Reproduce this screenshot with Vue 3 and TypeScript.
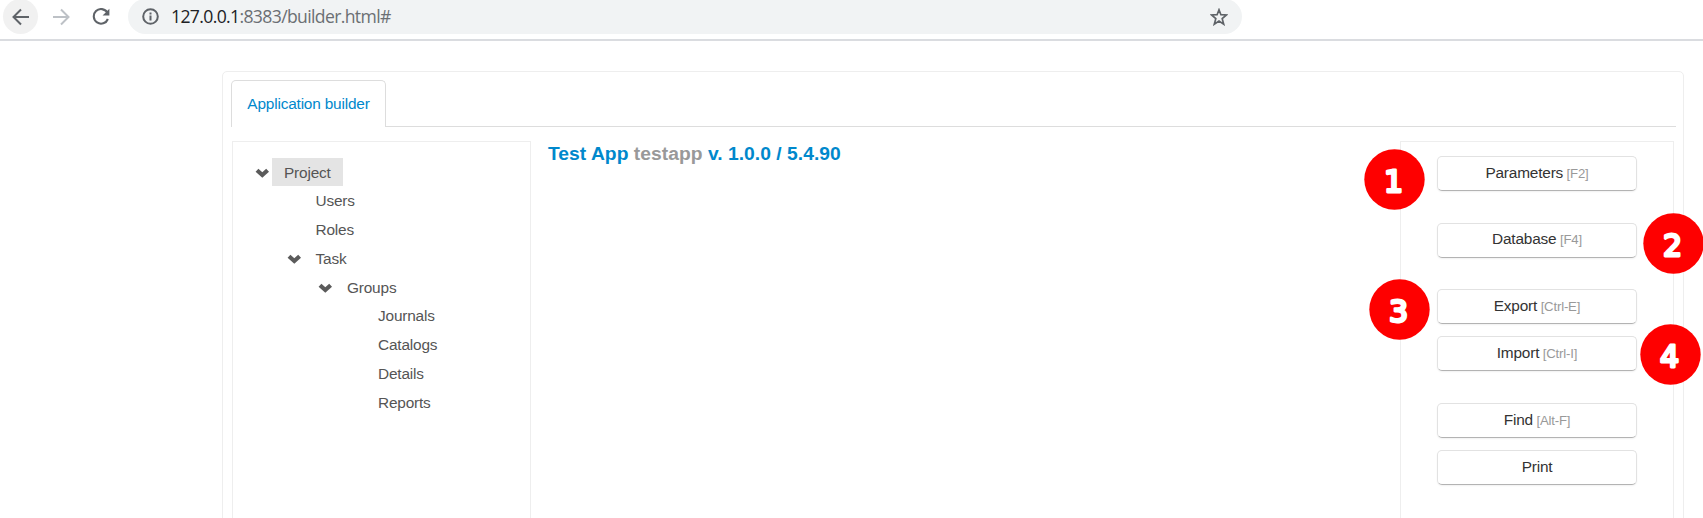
<script setup lang="ts">
interface TreeNode {
  label: string
  level: number
  open?: boolean
  selected?: boolean
}

interface Action {
  label: string
  key?: string
}

const tree: TreeNode[] = [
  { label: 'Project', level: 0, open: true, selected: true },
  { label: 'Users', level: 1 },
  { label: 'Roles', level: 1 },
  { label: 'Task', level: 1, open: true },
  { label: 'Groups', level: 2, open: true },
  { label: 'Journals', level: 3 },
  { label: 'Catalogs', level: 3 },
  { label: 'Details', level: 3 },
  { label: 'Reports', level: 3 },
]

const actionGroups: Action[][] = [
  [{ label: 'Parameters', key: '[F2]' }],
  [{ label: 'Database', key: '[F4]' }],
  [
    { label: 'Export', key: '[Ctrl-E]' },
    { label: 'Import', key: '[Ctrl-I]' },
  ],
  [{ label: 'Find', key: '[Alt-F]' }, { label: 'Print' }],
]

const markers = [1, 2, 3, 4]
</script>

<template>
  <div class="window">
    <header class="toolbar">
      <span class="nav-btn active">
        <svg width="18" height="18" viewBox="0 0 18 18"><path d="M17 9H2M9 1.500L1.500 9L9 16.500" fill="none" stroke="#5f6368" stroke-width="2" /></svg>
      </span>
      <span class="nav-btn">
        <svg width="18" height="18" viewBox="0 0 18 18"><path d="M1 9H16M9 1.500L16.500 9L9 16.500" fill="none" stroke="#bdc1c6" stroke-width="2" /></svg>
      </span>
      <span class="nav-btn">
        <svg width="18" height="18" viewBox="0 0 18 18">
          <path d="M15.300 4.500A7.300 7.300 0 1 0 15.900 11" fill="none" stroke="#5f6368" stroke-width="2.100" />
          <path d="M17.400 0.700V7.500H10.600Z" fill="#5f6368" />
        </svg>
      </span>
      <div class="omnibox">
        <svg class="info" width="17" height="17" viewBox="0 0 17 17">
          <circle cx="8.500" cy="8.500" r="7.300" fill="none" stroke="#5f6368" stroke-width="2" />
          <path d="M7.500 7.500h2v5h-2zM7.500 4.500h2v2h-2z" fill="#5f6368" />
        </svg>
        <span class="url"><b>127.0.0.1</b>:8383/builder.html#</span>
        <svg class="star" width="18" height="18" viewBox="0 0 18 18">
          <path d="M9 1.800L10.900 6.700L16.500 7L12.200 10.600L13.700 16.200L9 13.100L4.300 16.200L5.800 10.600L1.500 7L7.100 6.700Z" fill="none" stroke="#5f6368" stroke-width="1.700" />
        </svg>
      </div>
    </header>

    <main class="panel">
      <nav class="tabs"><a class="tab">Application builder</a></nav>
      <div class="columns">
        <aside class="tree">
          <div v-for="node in tree" :key="node.label" class="row" :class="'level-' + node.level">
            <svg v-if="node.open" class="chevron" width="15" height="11" viewBox="0 0 15 11">
              <path d="M2 3.200L7.300 8L12.600 3.200" fill="none" stroke="#5b5b5b" stroke-width="4.200" />
            </svg>
            <span class="label" :class="{ selected: node.selected }">{{ node.label }}</span>
          </div>
        </aside>
        <section class="content">
          <h4>Test App <span>testapp</span> v. 1.0.0 / 5.4.90</h4>
        </section>
        <aside class="actions">
          <div v-for="(group, i) in actionGroups" :key="i" class="group">
            <button v-for="action in group" :key="action.label" type="button">
              {{ action.label }}<small v-if="action.key">&nbsp;{{ action.key }}</small>
            </button>
          </div>
        </aside>
      </div>
    </main>

    <svg v-for="n in markers" :key="n" class="marker" :class="'marker-' + n" width="61" height="61" viewBox="0 0 61 61">
      <circle cx="30.500" cy="30.500" r="30.200" fill="#fe0000" />
      <text x="29.500" y="42.800" text-anchor="middle">{{ n }}</text>
    </svg>
  </div>
</template>

<style>
body {
  overflow: hidden;
}
</style>

<style scoped>
.window {
  position: relative;
  box-sizing: border-box;
  width: 1703px;
  height: 518px;
  overflow: hidden;
  background: #fff;
  font: 15.4px/22px "Liberation Sans", Arial, sans-serif;
  letter-spacing: -0.18px;
  color: #333;
}
.toolbar {
  box-sizing: border-box;
  height: 41px;
  display: flex;
  align-items: flex-start;
  gap: 5px;
  padding-left: 3px;
  border-bottom: 2px solid #dadce0;
}
.nav-btn {
  width: 35px;
  height: 35px;
  margin-top: -1px;
  border-radius: 50%;
  display: flex;
  align-items: center;
  justify-content: center;
}
.nav-btn.active {
  background: #f1f1f1;
}
.omnibox {
  box-sizing: border-box;
  width: 1114px;
  height: 35px;
  margin: -1px 0 0 5px;
  padding: 0 14px;
  border-radius: 18px;
  background: #f1f3f4;
  display: flex;
  align-items: center;
}
.url {
  margin-left: 12px;
  font: 17.6px/34px "Open Sans", "Noto Sans", sans-serif;
  letter-spacing: -0.64px;
  padding-bottom: 1px;
  color: #6b6f73;
}
.url b {
  font-weight: 400;
  color: #202124;
}
.star {
  margin-left: auto;
}
.panel {
  box-sizing: border-box;
  width: 1462px;
  height: 480px;
  margin: 30px 0 0 222px;
  padding: 8px;
  border: 1px solid #eee;
  border-radius: 5px;
}
.tabs {
  box-sizing: border-box;
  height: 47px;
  width: 1445px;
  display: flex;
  border-bottom: 1px solid #ddd;
}
.tab {
  box-sizing: border-box;
  width: 155px;
  height: 47px;
  border: 1px solid #ddd;
  border-bottom: 0;
  border-radius: 5px 5px 0 0;
  background: #fff;
  color: #0088cc;
  line-height: 46px;
  text-align: center;
}
.columns {
  display: flex;
  height: 400px;
  margin: 14px 0 0 1px;
}
.tree {
  box-sizing: border-box;
  width: 299px;
  border: 1px solid #eee;
  padding: 16px 0 0 22px;
}
.row {
  display: flex;
  align-items: center;
  height: 28.800px;
}
.level-1 { padding-left: 31.500px; }
.level-2 { padding-left: 63px; }
.level-3 { padding-left: 94px; }
.chevron {
  margin-right: 2px;
}
.label {
  padding: 0 12px;
  line-height: 28px;
  color: #555;
}
.row > .label:first-child {
  margin-left: 17px;
}
.label.selected {
  box-sizing: border-box;
  height: 28px;
  padding-top: 1px;
  line-height: 27px;
  background: #e4e4e4;
}
.content {
  flex: 1;
  padding-left: 17px;
}
h4 {
  margin: 2px 0 0;
  font-size: 19.250px;
  line-height: 22px;
  letter-spacing: 0.03px;
  color: #0088cc;
}
h4 span {
  color: #999;
}
.actions {
  box-sizing: border-box;
  width: 274px;
  margin-right: 1px;
  border: 1px solid #eee;
  padding: 14px 0 0 36px;
}
.group {
  display: flex;
  flex-direction: column;
  gap: 12px;
  margin-bottom: 31.600px;
}
button {
  box-sizing: border-box;
  width: 200px;
  height: 35px;
  padding: 0 0 0.300px;
  border: 1px solid #e2e2e2;
  border-bottom-color: #b3b3b3;
  border-radius: 5px;
  background: #fff;
  box-shadow: 0 1px 2px rgba(0, 0, 0, 0.06);
  font: inherit;
  letter-spacing: inherit;
  color: #333;
}
small {
  font-size: 13.200px;
  color: #999;
}
.marker {
  position: absolute;
}
.marker text {
  font: 30px "DejaVu Sans", sans-serif;
  letter-spacing: 0;
  fill: #fff;
  stroke: #fff;
  stroke-width: 2.800px;
  stroke-linejoin: round;
}
.marker-1 { left: 1364px; top: 149px; }
.marker-2 { left: 1643px; top: 213px; }
.marker-3 { left: 1369px; top: 279px; }
.marker-4 { left: 1640px; top: 324px; }
</style>
